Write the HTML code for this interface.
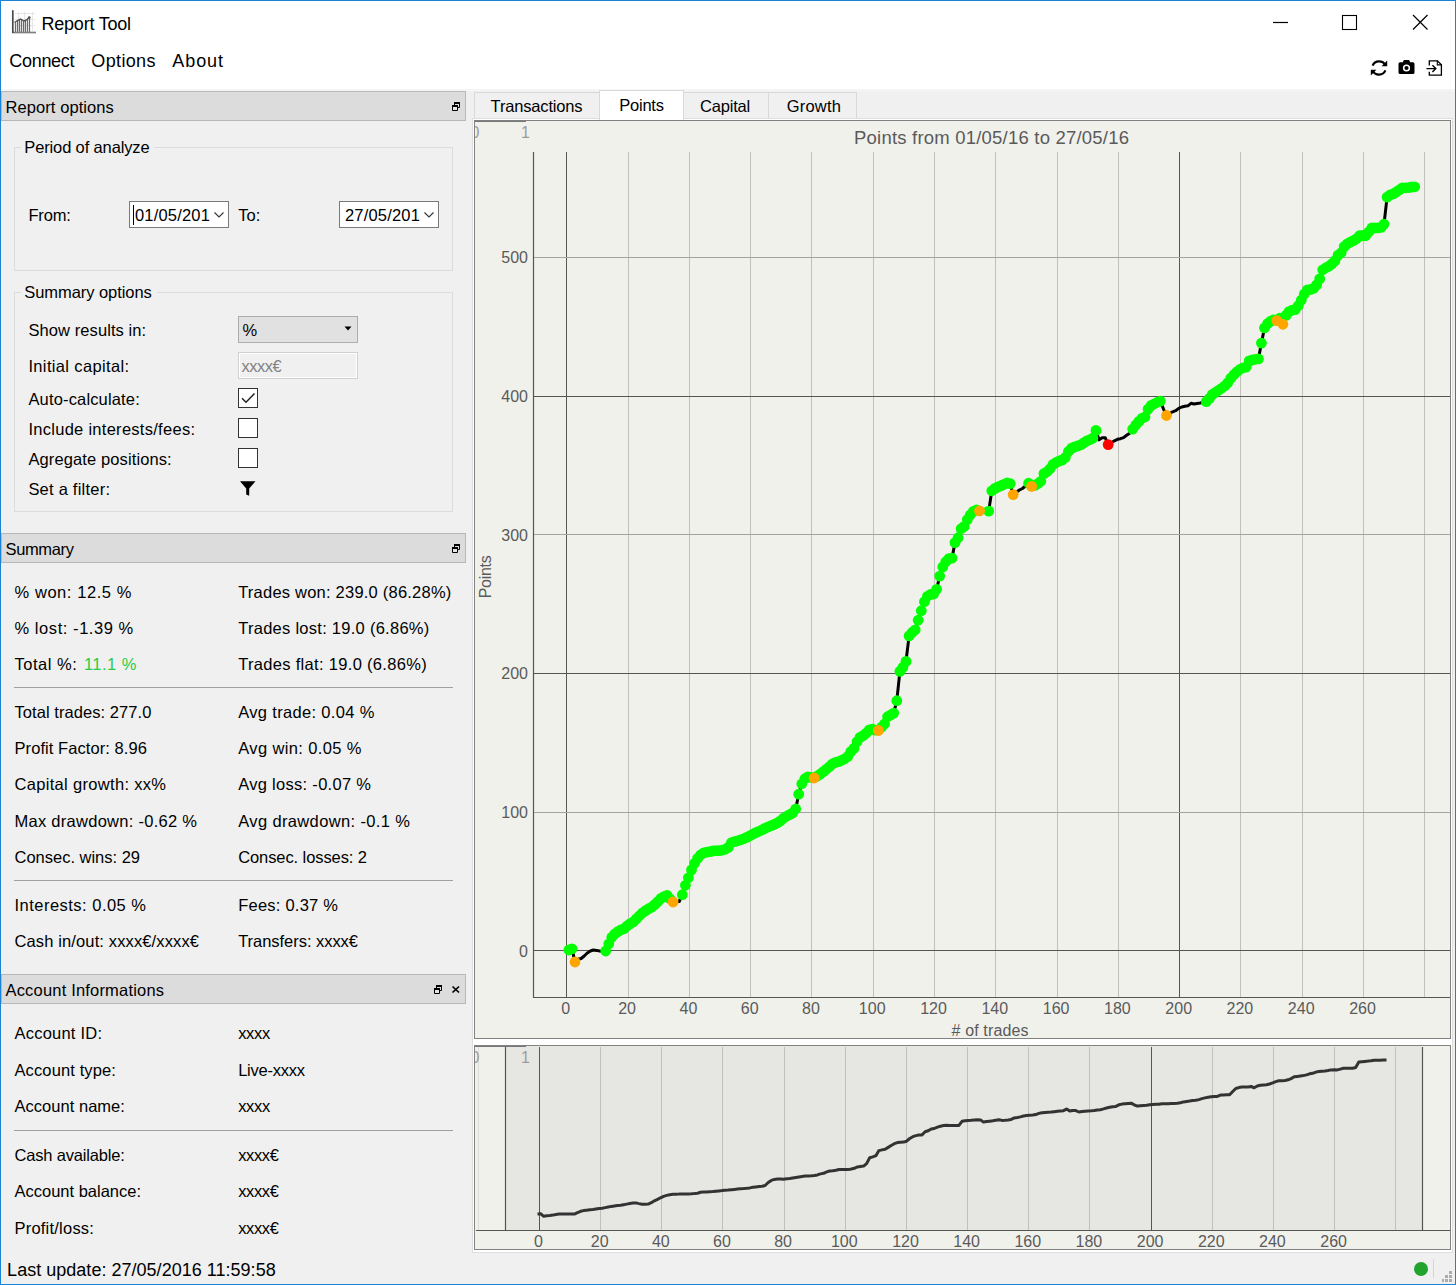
<!DOCTYPE html>
<html lang="en"><head><meta charset="utf-8"><title>Report Tool</title>
<style>
html,body{margin:0;padding:0}
body{width:1456px;height:1285px;position:relative;overflow:hidden;background:#f0f0f0;font-family:"Liberation Sans",sans-serif}
.r{position:absolute;display:block}
.t{position:absolute;white-space:pre;line-height:20px;height:20px}
</style></head><body>
<div class="r" style="left:0px;top:0px;width:1456px;height:1285px;background:#f0f0f0;"></div>
<div class="r" style="left:1px;top:1px;width:1454px;height:88px;background:#fff;"></div>
<div class="r" style="left:1px;top:89px;width:1454px;height:2px;background:#f5f5f5;"></div>
<svg class="r" style="left:0;top:0" width="40" height="40" viewBox="0 0 40 40">
<path d="M18.500 12v19M24.500 12v19M32.500 12v19M15 13.500h20M15 19.500h20M15 25.500h20" stroke="#e6e6e6" stroke-width="1" fill="none"/>
<path d="M15.500 22.500V32M17.500 21V32M19.500 19.500V32M21.500 19.500V32M23.500 21V32M25.500 21V32M27.500 19.500V32M29.500 17.500V32" stroke="#6a6a6a" stroke-width="1.200" fill="none"/>
<path d="M14.500 22.500L17.500 20.500 20.500 19 24 21 26.500 20 29.500 17" stroke="#505050" stroke-width="1.400" fill="none"/>
<circle cx="29.300" cy="17.600" r="1.300" fill="#505050"/>
<path d="M12 32.500H36" fill="none" stroke="#808080" stroke-width="1.700"/><path d="M12.800 10.200V33" fill="none" stroke="#4a4a4a" stroke-width="1.700"/>
</svg>
<span class="t" style="left:41.5px;top:13.76px;font-size:18.00px;color:#000;letter-spacing:-0.223px;">Report Tool</span>
<svg class="r" style="left:1260px;top:6px" width="190" height="34" viewBox="0 0 190 34">
<path d="M13 16.500h15" stroke="#000" stroke-width="1.200" fill="none"/>
<rect x="82.500" y="9.500" width="14" height="14" fill="none" stroke="#000" stroke-width="1.100"/>
<path d="M153 9l14.5 14.5M167.5 9L153 23.5" stroke="#000" stroke-width="1.2" fill="none"/>
</svg>
<span class="t" style="left:9.3px;top:50.76px;font-size:18.00px;color:#000;letter-spacing:-0.308px;">Connect</span>
<span class="t" style="left:91.3px;top:50.76px;font-size:18.00px;color:#000;letter-spacing:0.361px;">Options</span>
<span class="t" style="left:172.3px;top:50.76px;font-size:18.00px;color:#000;letter-spacing:0.914px;">About</span>
<svg class="r" style="left:1367px;top:55.5px" width="82" height="24" viewBox="0 0 82 24">
<g fill="none" stroke="#000" stroke-width="2.2">
<path d="M18.3 9.2A7 7 0 0 0 5.6 9.6"/><path d="M5.7 14.8A7 7 0 0 0 18.4 14.4"/></g>
<path d="M20.2 4.6v5.6h-5.6zM3.8 19.4v-5.6h5.6z" fill="#000"/>
<path d="M31.5 7.8a1.6 1.6 0 0 1 1.6-1.6h2.6l1.2-2.1h5.2l1.2 2.1h2.6a1.6 1.6 0 0 1 1.6 1.6v8.6a1.6 1.6 0 0 1-1.6 1.6H33.1a1.6 1.6 0 0 1-1.6-1.6z" fill="#000"/>
<circle cx="39.5" cy="12" r="3.6" fill="#fff"/><circle cx="39.5" cy="12" r="2.1" fill="#000"/>
<path d="M62.3 9.5V4.8h8.2l3.9 3.9v10.5H62.3v-3.4" fill="none" stroke="#000" stroke-width="1.3"/>
<path d="M70.3 4.8v4.1h4.1" fill="none" stroke="#000" stroke-width="1.1"/>
<path d="M59.5 12.6h9M65.4 9.2l3.4 3.4-3.4 3.4" fill="none" stroke="#000" stroke-width="1.4"/>
</svg>
<div class="r" style="left:1px;top:91px;width:465px;height:30px;background:#dcdcdc;border:1px solid #b8b8b8;box-sizing:border-box;"></div>
<span class="t" style="left:5.5px;top:97.28px;font-size:16.50px;color:#000;letter-spacing:0.076px;">Report options</span>
<svg class="r" style="left:452px;top:102px" width="9" height="10" viewBox="0 0 9 10">
<path d="M2.500 0.500h5v5h-5z" fill="none" stroke="#000" stroke-width="1"/><path d="M2 1h6" stroke="#000" stroke-width="2"/>
<path d="M0.500 3.500h5v5h-5z" fill="#e4e4e4" stroke="#000" stroke-width="1"/><path d="M0 4h6" stroke="#000" stroke-width="2"/></svg>
<div class="r" style="left:1px;top:533px;width:465px;height:30px;background:#dcdcdc;border:1px solid #b8b8b8;box-sizing:border-box;"></div>
<span class="t" style="left:5.5px;top:539.28px;font-size:16.50px;color:#000;letter-spacing:-0.366px;">Summary</span>
<svg class="r" style="left:452px;top:544px" width="9" height="10" viewBox="0 0 9 10">
<path d="M2.500 0.500h5v5h-5z" fill="none" stroke="#000" stroke-width="1"/><path d="M2 1h6" stroke="#000" stroke-width="2"/>
<path d="M0.500 3.500h5v5h-5z" fill="#e4e4e4" stroke="#000" stroke-width="1"/><path d="M0 4h6" stroke="#000" stroke-width="2"/></svg>
<div class="r" style="left:1px;top:974px;width:465px;height:30px;background:#dcdcdc;border:1px solid #b8b8b8;box-sizing:border-box;"></div>
<span class="t" style="left:5.5px;top:980.28px;font-size:16.50px;color:#000;letter-spacing:0.184px;">Account Informations</span>
<svg class="r" style="left:434px;top:985px" width="9" height="10" viewBox="0 0 9 10">
<path d="M2.500 0.500h5v5h-5z" fill="none" stroke="#000" stroke-width="1"/><path d="M2 1h6" stroke="#000" stroke-width="2"/>
<path d="M0.500 3.500h5v5h-5z" fill="#e4e4e4" stroke="#000" stroke-width="1"/><path d="M0 4h6" stroke="#000" stroke-width="2"/></svg>
<svg class="r" style="left:451px;top:985px" width="10" height="9" viewBox="0 0 10 9">
<path d="M1.500 1.500l6.500 6M8 1.500l-6.500 6" stroke="#000" stroke-width="1.700" fill="none"/></svg>
<div class="r" style="left:14px;top:147px;width:439px;height:124px;border:1px solid #dcdcdc;box-sizing:border-box;"></div>
<div class="r" style="left:21px;top:145px;width:133.3px;height:5px;background:#f0f0f0;"></div>
<span class="t" style="left:24.3px;top:137.08px;font-size:16.50px;color:#000;letter-spacing:-0.137px;">Period of analyze</span>
<div class="r" style="left:14px;top:292px;width:439px;height:220px;border:1px solid #dcdcdc;box-sizing:border-box;"></div>
<div class="r" style="left:21px;top:290px;width:135.5px;height:5px;background:#f0f0f0;"></div>
<span class="t" style="left:24.3px;top:282.08px;font-size:16.50px;color:#000;letter-spacing:-0.063px;">Summary options</span>
<span class="t" style="left:28.4px;top:205.28px;font-size:16.50px;color:#000;letter-spacing:-0.146px;">From:</span>
<span class="t" style="left:238.3px;top:205.28px;font-size:16.50px;color:#000;letter-spacing:-0.006px;">To:</span>
<div class="r" style="left:129px;top:201px;width:100px;height:27px;background:#fff;border:1px solid #7a7a7a;box-sizing:border-box;"></div>
<span class="t" style="left:134.9px;top:205.28px;font-size:16.50px;color:#000;letter-spacing:0.200px;">01/05/201</span>
<svg class="r" style="left:212px;top:210px" width="14" height="10" viewBox="0 0 14 10"><path d="M2.500 2.500l4.500 4.500 4.500-4.500" fill="none" stroke="#333" stroke-width="1.100"/></svg>
<div class="r" style="left:133px;top:205px;width:1px;height:20px;background:#000;"></div>
<div class="r" style="left:339px;top:201px;width:100px;height:27px;background:#fff;border:1px solid #7a7a7a;box-sizing:border-box;"></div>
<span class="t" style="left:344.9px;top:205.28px;font-size:16.50px;color:#000;letter-spacing:0.200px;">27/05/201</span>
<svg class="r" style="left:422px;top:210px" width="14" height="10" viewBox="0 0 14 10"><path d="M2.500 2.500l4.500 4.500 4.500-4.500" fill="none" stroke="#333" stroke-width="1.100"/></svg>
<span class="t" style="left:28.4px;top:320.28px;font-size:16.50px;color:#000;letter-spacing:0.089px;">Show results in:</span>
<span class="t" style="left:28.4px;top:356.28px;font-size:16.50px;color:#000;letter-spacing:0.355px;">Initial capital:</span>
<span class="t" style="left:28.4px;top:389.28px;font-size:16.50px;color:#000;letter-spacing:0.161px;">Auto-calculate:</span>
<span class="t" style="left:28.4px;top:419.28px;font-size:16.50px;color:#000;letter-spacing:0.277px;">Include interests/fees:</span>
<span class="t" style="left:28.4px;top:449.28px;font-size:16.50px;color:#000;letter-spacing:0.114px;">Agregate positions:</span>
<span class="t" style="left:28.4px;top:479.28px;font-size:16.50px;color:#000;letter-spacing:0.227px;">Set a filter:</span>
<div class="r" style="left:238px;top:316px;width:120px;height:27px;background:#e1e1e1;border:1px solid #adadad;box-sizing:border-box;"></div>
<span class="t" style="left:242.5px;top:320.28px;font-size:16.50px;color:#000;">%</span>
<svg class="r" style="left:343px;top:325px" width="10" height="8" viewBox="0 0 10 8"><path d="M1.500 1.500h7L5 5.500z" fill="#000"/></svg>
<div class="r" style="left:238px;top:352px;width:120px;height:27px;background:#f0f0f0;border:1px solid #d0d0d0;box-sizing:border-box;box-shadow:0 0 0 1px #fff inset;"></div>
<span class="t" style="left:241.4px;top:356.28px;font-size:16.50px;color:#838383;letter-spacing:-0.444px;">xxxx€</span>
<div class="r" style="left:238px;top:388px;width:20px;height:20px;background:#fff;border:1px solid #333;box-sizing:border-box;"></div>
<svg class="r" style="left:238px;top:388px" width="20" height="20" viewBox="0 0 20 20"><path d="M4 10.300l4 4 8.500-8.800" fill="none" stroke="#222" stroke-width="1.500"/></svg>
<div class="r" style="left:238px;top:418px;width:20px;height:20px;background:#fff;border:1px solid #333;box-sizing:border-box;"></div>
<div class="r" style="left:238px;top:448px;width:20px;height:20px;background:#fff;border:1px solid #333;box-sizing:border-box;"></div>
<svg class="r" style="left:238px;top:479px" width="20" height="20" viewBox="0 0 20 20"><path d="M2 2.200h15.500L11.200 9.400v7.400l-3.000-1.400V9.400z" fill="#000"/></svg>
<span class="t" style="left:14.5px;top:582.28px;font-size:16.50px;color:#000;letter-spacing:0.569px;">% won: 12.5 %</span>
<span class="t" style="left:238.2px;top:582.28px;font-size:16.50px;color:#000;letter-spacing:0.220px;">Trades won: 239.0 (86.28%)</span>
<span class="t" style="left:14.5px;top:618.28px;font-size:16.50px;color:#000;letter-spacing:0.559px;">% lost: -1.39 %</span>
<span class="t" style="left:238.2px;top:618.28px;font-size:16.50px;color:#000;letter-spacing:0.269px;">Trades lost: 19.0 (6.86%)</span>
<span class="t" style="left:14.5px;top:654.28px;font-size:16.50px;color:#000;letter-spacing:0.515px;">Total %:</span>
<span class="t" style="left:83.9px;top:654.28px;font-size:16.50px;color:#2ecc40;letter-spacing:0.490px;">11.1 %</span>
<span class="t" style="left:238.2px;top:654.28px;font-size:16.50px;color:#000;letter-spacing:0.313px;">Trades flat: 19.0 (6.86%)</span>
<div class="r" style="left:14px;top:687px;width:439px;height:1px;background:#a0a0a0;"></div>
<span class="t" style="left:14.5px;top:702.28px;font-size:16.50px;color:#000;letter-spacing:0.063px;">Total trades: 277.0</span>
<span class="t" style="left:238.2px;top:702.28px;font-size:16.50px;color:#000;letter-spacing:0.333px;">Avg trade: 0.04 %</span>
<span class="t" style="left:14.5px;top:738.28px;font-size:16.50px;color:#000;letter-spacing:0.070px;">Profit Factor: 8.96</span>
<span class="t" style="left:238.2px;top:738.28px;font-size:16.50px;color:#000;letter-spacing:0.377px;">Avg win: 0.05 %</span>
<span class="t" style="left:14.5px;top:774.28px;font-size:16.50px;color:#000;letter-spacing:0.316px;">Capital growth: xx%</span>
<span class="t" style="left:238.2px;top:774.28px;font-size:16.50px;color:#000;letter-spacing:0.294px;">Avg loss: -0.07 %</span>
<span class="t" style="left:14.5px;top:811.28px;font-size:16.50px;color:#000;letter-spacing:0.275px;">Max drawdown: -0.62 %</span>
<span class="t" style="left:238.2px;top:811.28px;font-size:16.50px;color:#000;letter-spacing:0.369px;">Avg drawdown: -0.1 %</span>
<span class="t" style="left:14.5px;top:847.28px;font-size:16.50px;color:#000;letter-spacing:-0.009px;">Consec. wins: 29</span>
<span class="t" style="left:238.2px;top:847.28px;font-size:16.50px;color:#000;letter-spacing:-0.089px;">Consec. losses: 2</span>
<div class="r" style="left:14px;top:880px;width:439px;height:1px;background:#a0a0a0;"></div>
<span class="t" style="left:14.5px;top:895.28px;font-size:16.50px;color:#000;letter-spacing:0.480px;">Interests: 0.05 %</span>
<span class="t" style="left:238.2px;top:895.28px;font-size:16.50px;color:#000;letter-spacing:0.234px;">Fees: 0.37 %</span>
<span class="t" style="left:14.5px;top:931.28px;font-size:16.50px;color:#000;letter-spacing:0.127px;">Cash in/out: xxxx€/xxxx€</span>
<span class="t" style="left:238.2px;top:931.28px;font-size:16.50px;color:#000;letter-spacing:-0.041px;">Transfers: xxxx€</span>
<span class="t" style="left:14.5px;top:1023.28px;font-size:16.50px;color:#000;letter-spacing:0.221px;">Account ID:</span>
<span class="t" style="left:238.2px;top:1023.28px;font-size:16.50px;color:#000;letter-spacing:-0.333px;">xxxx</span>
<span class="t" style="left:14.5px;top:1060.28px;font-size:16.50px;color:#000;letter-spacing:0.119px;">Account type:</span>
<span class="t" style="left:238.2px;top:1060.28px;font-size:16.50px;color:#000;letter-spacing:-0.245px;">Live-xxxx</span>
<span class="t" style="left:14.5px;top:1096.28px;font-size:16.50px;color:#000;letter-spacing:0.028px;">Account name:</span>
<span class="t" style="left:238.2px;top:1096.28px;font-size:16.50px;color:#000;letter-spacing:-0.333px;">xxxx</span>
<div class="r" style="left:14px;top:1130px;width:439px;height:1px;background:#a0a0a0;"></div>
<span class="t" style="left:14.5px;top:1145.28px;font-size:16.50px;color:#000;letter-spacing:-0.172px;">Cash available:</span>
<span class="t" style="left:238.2px;top:1145.28px;font-size:16.50px;color:#000;letter-spacing:-0.369px;">xxxx€</span>
<span class="t" style="left:14.5px;top:1181.28px;font-size:16.50px;color:#000;letter-spacing:-0.005px;">Account balance:</span>
<span class="t" style="left:238.2px;top:1181.28px;font-size:16.50px;color:#000;letter-spacing:-0.369px;">xxxx€</span>
<span class="t" style="left:14.5px;top:1218.28px;font-size:16.50px;color:#000;letter-spacing:0.216px;">Profit/loss:</span>
<span class="t" style="left:238.2px;top:1218.28px;font-size:16.50px;color:#000;letter-spacing:-0.369px;">xxxx€</span>
<span class="t" style="left:7.1px;top:1259.76px;font-size:18.00px;color:#000;letter-spacing:0.022px;">Last update: 27/05/2016 11:59:58</span>
<div class="r" style="left:1414px;top:1262px;width:14px;height:14px;border-radius:50%;background:#22a32e"></div>
<div class="r" style="left:1433px;top:1259px;width:1px;height:19px;background:#d6d6d6;"></div>
<svg class="r" style="left:1440px;top:1269px" width="14" height="14" viewBox="0 0 14 14"><g fill="#adadad"><rect x="9" y="2" width="3" height="3"/><rect x="5" y="6" width="3" height="3"/><rect x="9" y="6" width="3" height="3"/><rect x="2" y="10" width="2" height="3"/><rect x="5" y="10" width="3" height="3"/><rect x="9" y="10" width="3" height="3"/></g></svg>
<div class="r" style="left:472px;top:118px;width:981px;height:1135px;background:#fff;border:1px solid #dedede;box-sizing:border-box;"></div>
<div class="r" style="left:474px;top:92px;width:126px;height:26px;background:#f0f0f0;border:1px solid #d9d9d9;box-sizing:border-box;border-bottom:none;"></div>
<span class="t" style="left:490.6px;top:95.78px;font-size:16.50px;color:#000;letter-spacing:-0.167px;">Transactions</span>
<div class="r" style="left:683px;top:92px;width:86px;height:26px;background:#f0f0f0;border:1px solid #d9d9d9;box-sizing:border-box;border-bottom:none;"></div>
<span class="t" style="left:700.0px;top:95.78px;font-size:16.50px;color:#000;letter-spacing:-0.193px;">Capital</span>
<div class="r" style="left:768px;top:92px;width:89px;height:26px;background:#f0f0f0;border:1px solid #d9d9d9;box-sizing:border-box;border-bottom:none;"></div>
<span class="t" style="left:786.8px;top:95.78px;font-size:16.50px;color:#000;letter-spacing:0.183px;">Growth</span>
<div class="r" style="left:599px;top:90px;width:85px;height:30px;background:#fff;border:1px solid #d9d9d9;box-sizing:border-box;border-bottom:none;"></div>
<span class="t" style="left:619.2px;top:95.08px;font-size:16.50px;color:#000;letter-spacing:-0.211px;">Points</span>
<svg class="r" style="left:474px;top:120px" width="977" height="919" viewBox="474 120 977 919" font-family="Liberation Sans, sans-serif">
<rect x="474" y="120" width="977" height="919" fill="#f1f1ec"/>
<path d="M566.5 152 V997" stroke="#555" stroke-width="1"/>
<path d="M628.5 152 V997" stroke="#c0c0bc" stroke-width="1"/>
<path d="M689.5 152 V997" stroke="#c0c0bc" stroke-width="1"/>
<path d="M750.5 152 V997" stroke="#c0c0bc" stroke-width="1"/>
<path d="M811.5 152 V997" stroke="#c0c0bc" stroke-width="1"/>
<path d="M873.5 152 V997" stroke="#c0c0bc" stroke-width="1"/>
<path d="M934.5 152 V997" stroke="#c0c0bc" stroke-width="1"/>
<path d="M995.5 152 V997" stroke="#c0c0bc" stroke-width="1"/>
<path d="M1057.5 152 V997" stroke="#c0c0bc" stroke-width="1"/>
<path d="M1118.5 152 V997" stroke="#c0c0bc" stroke-width="1"/>
<path d="M1179.5 152 V997" stroke="#555" stroke-width="1"/>
<path d="M1240.5 152 V997" stroke="#c0c0bc" stroke-width="1"/>
<path d="M1302.5 152 V997" stroke="#c0c0bc" stroke-width="1"/>
<path d="M1363.5 152 V997" stroke="#c0c0bc" stroke-width="1"/>
<path d="M1424.5 152 V997" stroke="#c0c0bc" stroke-width="1"/>
<path d="M533 950.5 H1450" stroke="#555" stroke-width="1"/>
<path d="M533 812.5 H1450" stroke="#a3a3a0" stroke-width="1"/>
<path d="M533 673.5 H1450" stroke="#555" stroke-width="1"/>
<path d="M533 534.5 H1450" stroke="#a3a3a0" stroke-width="1"/>
<path d="M533 396.5 H1450" stroke="#555" stroke-width="1"/>
<path d="M533 257.5 H1450" stroke="#a3a3a0" stroke-width="1"/>
<path d="M533.5 152 V997.5 H1450" fill="none" stroke="#555" stroke-width="1.2"/>
<path d="M568.9 950.0 L572.0 948.8 L575.0 962.0 L578.1 959.3 L581.2 958.5 L584.2 956.0 L587.3 953.0 L590.4 951.0 L593.4 950.0 L596.5 950.4 L599.6 951.0 L602.6 951.2 L605.7 951.0 L608.8 943.8 L611.8 937.2 L614.9 933.8 L617.9 931.6 L621.0 929.9 L624.1 928.6 L627.1 926.0 L630.2 923.6 L633.3 921.9 L636.3 918.9 L639.4 915.8 L642.5 912.8 L645.5 910.6 L648.6 908.7 L651.7 907.2 L654.7 904.6 L657.8 901.6 L660.8 898.5 L663.9 896.6 L667.0 895.4 L670.0 898.8 L673.1 902.0 L676.2 901.8 L679.2 901.6 L682.3 894.7 L685.4 885.3 L688.4 877.8 L691.5 869.9 L694.6 863.3 L697.6 858.4 L700.7 854.8 L703.7 852.8 L706.8 852.1 L709.9 851.6 L712.9 851.0 L716.0 850.7 L719.1 850.7 L722.1 850.2 L725.2 849.3 L728.3 847.4 L731.3 842.7 L734.4 841.7 L737.5 840.8 L740.5 839.9 L743.6 838.8 L746.6 837.4 L749.7 835.9 L752.8 834.2 L755.8 832.6 L758.9 831.3 L762.0 829.9 L765.0 828.4 L768.1 826.9 L771.2 825.7 L774.2 824.4 L777.3 822.9 L780.4 820.9 L783.4 818.2 L786.5 816.3 L789.5 814.6 L792.6 813.0 L795.7 809.0 L798.7 794.2 L801.8 783.8 L804.9 778.7 L807.9 776.8 L811.0 777.4 L814.1 778.0 L817.1 776.1 L820.2 774.1 L823.3 771.6 L826.3 769.2 L829.4 766.7 L832.4 764.0 L835.5 762.4 L838.6 761.6 L841.6 760.3 L844.7 758.8 L847.8 756.5 L850.8 751.6 L853.9 748.4 L857.0 741.8 L860.0 737.4 L863.1 735.6 L866.2 733.1 L869.2 730.0 L872.3 729.1 L875.3 730.1 L878.4 730.5 L881.5 727.2 L884.5 724.0 L887.6 716.7 L890.7 715.0 L893.7 713.1 L896.8 700.7 L899.9 671.4 L902.9 667.4 L906.0 661.4 L909.1 635.9 L912.1 632.5 L915.2 629.8 L918.2 620.2 L921.3 610.7 L924.4 601.7 L927.4 596.3 L930.5 594.5 L933.6 594.0 L936.6 589.3 L939.7 576.1 L942.8 566.9 L945.8 561.7 L948.9 558.6 L952.0 558.1 L955.0 542.6 L958.1 537.7 L961.1 528.7 L964.2 526.4 L967.3 519.6 L970.3 514.8 L973.4 511.3 L976.5 510.0 L979.5 510.9 L982.6 511.1 L985.7 511.1 L988.7 511.1 L991.8 490.8 L994.9 488.4 L997.9 486.9 L1001.0 485.7 L1004.0 484.3 L1007.1 483.0 L1010.2 483.6 L1013.2 494.6 L1016.3 492.2 L1019.4 490.0 L1022.4 488.5 L1025.5 486.0 L1028.6 483.2 L1031.6 486.4 L1034.7 485.4 L1037.8 483.7 L1040.8 481.3 L1043.9 473.6 L1046.9 471.8 L1050.0 468.8 L1053.1 464.4 L1056.1 462.5 L1059.2 461.0 L1062.3 460.0 L1065.3 457.5 L1068.4 451.5 L1071.5 448.2 L1074.5 447.0 L1077.6 446.0 L1080.7 444.9 L1083.7 442.9 L1086.8 440.9 L1089.8 439.7 L1092.9 438.1 L1096.0 430.4 L1099.0 439.9 L1102.1 437.7 L1105.2 437.7 L1108.2 444.6 L1111.3 442.7 L1114.4 440.8 L1117.4 439.3 L1120.5 438.7 L1123.6 437.6 L1126.6 435.3 L1129.7 433.2 L1132.7 429.1 L1135.8 425.0 L1138.9 421.4 L1141.9 418.3 L1145.0 417.0 L1148.1 409.1 L1151.1 405.5 L1154.2 403.8 L1157.3 402.3 L1160.3 401.1 L1163.4 408.8 L1166.5 415.5 L1169.5 413.6 L1172.6 411.8 L1175.6 410.7 L1178.7 408.4 L1181.8 407.0 L1184.8 406.3 L1187.9 405.8 L1191.0 403.3 L1194.0 404.0 L1197.1 403.5 L1200.2 403.0 L1203.2 402.3 L1206.3 401.6 L1209.4 398.4 L1212.4 394.4 L1215.5 392.3 L1218.5 390.3 L1221.6 388.3 L1224.7 386.0 L1227.7 382.9 L1230.8 378.1 L1233.9 374.7 L1236.9 371.8 L1240.0 369.3 L1243.1 367.8 L1246.1 367.2 L1249.2 360.9 L1252.3 360.0 L1255.3 359.3 L1258.4 358.9 L1261.4 343.1 L1264.5 327.9 L1267.6 323.6 L1270.6 321.2 L1273.7 320.0 L1276.8 320.6 L1279.8 318.1 L1282.9 324.3 L1286.0 315.4 L1289.0 311.6 L1292.1 310.1 L1295.2 309.6 L1298.2 305.7 L1301.3 300.1 L1304.3 294.0 L1307.4 289.8 L1310.5 289.5 L1313.5 288.4 L1316.6 284.9 L1319.7 278.9 L1322.7 269.8 L1325.8 267.8 L1328.9 266.2 L1331.9 263.9 L1335.0 260.6 L1338.1 255.1 L1341.1 252.8 L1344.2 246.6 L1347.2 243.9 L1350.3 242.1 L1353.4 240.6 L1356.4 238.8 L1359.5 235.7 L1362.6 235.5 L1365.6 235.8 L1368.7 232.0 L1371.8 228.0 L1374.8 228.0 L1377.9 227.9 L1381.0 227.4 L1384.0 224.1 L1387.1 197.1 L1390.1 195.0 L1393.2 193.9 L1396.3 192.0 L1399.3 190.0 L1402.4 187.8 L1405.5 187.8 L1408.5 187.6 L1411.6 187.0 L1414.7 186.8" fill="none" stroke="#000" stroke-width="3" stroke-linejoin="round" stroke-linecap="round"/>
<g fill="#00ff00">
<circle cx="568.9" cy="950.0" r="5.4"/><circle cx="572.0" cy="948.8" r="5.4"/><circle cx="605.7" cy="951.0" r="5.4"/><circle cx="608.8" cy="943.8" r="5.4"/><circle cx="611.8" cy="937.2" r="5.4"/><circle cx="614.9" cy="933.8" r="5.4"/><circle cx="617.9" cy="931.6" r="5.4"/><circle cx="621.0" cy="929.9" r="5.4"/><circle cx="624.1" cy="928.6" r="5.4"/><circle cx="627.1" cy="926.0" r="5.4"/><circle cx="630.2" cy="923.6" r="5.4"/><circle cx="633.3" cy="921.9" r="5.4"/><circle cx="636.3" cy="918.9" r="5.4"/><circle cx="639.4" cy="915.8" r="5.4"/><circle cx="642.5" cy="912.8" r="5.4"/><circle cx="645.5" cy="910.6" r="5.4"/><circle cx="648.6" cy="908.7" r="5.4"/><circle cx="651.7" cy="907.2" r="5.4"/><circle cx="654.7" cy="904.6" r="5.4"/><circle cx="657.8" cy="901.6" r="5.4"/><circle cx="660.8" cy="898.5" r="5.4"/><circle cx="663.9" cy="896.6" r="5.4"/><circle cx="667.0" cy="895.4" r="5.4"/><circle cx="670.0" cy="898.8" r="5.4"/><circle cx="682.3" cy="894.7" r="5.4"/><circle cx="685.4" cy="885.3" r="5.4"/><circle cx="688.4" cy="877.8" r="5.4"/><circle cx="691.5" cy="869.9" r="5.4"/><circle cx="694.6" cy="863.3" r="5.4"/><circle cx="697.6" cy="858.4" r="5.4"/><circle cx="700.7" cy="854.8" r="5.4"/><circle cx="703.7" cy="852.8" r="5.4"/><circle cx="706.8" cy="852.1" r="5.4"/><circle cx="709.9" cy="851.6" r="5.4"/><circle cx="712.9" cy="851.0" r="5.4"/><circle cx="716.0" cy="850.7" r="5.4"/><circle cx="719.1" cy="850.7" r="5.4"/><circle cx="722.1" cy="850.2" r="5.4"/><circle cx="725.2" cy="849.3" r="5.4"/><circle cx="728.3" cy="847.4" r="5.4"/><circle cx="731.3" cy="842.7" r="5.4"/><circle cx="734.4" cy="841.7" r="5.4"/><circle cx="737.5" cy="840.8" r="5.4"/><circle cx="740.5" cy="839.9" r="5.4"/><circle cx="743.6" cy="838.8" r="5.4"/><circle cx="746.6" cy="837.4" r="5.4"/><circle cx="749.7" cy="835.9" r="5.4"/><circle cx="752.8" cy="834.2" r="5.4"/><circle cx="755.8" cy="832.6" r="5.4"/><circle cx="758.9" cy="831.3" r="5.4"/><circle cx="762.0" cy="829.9" r="5.4"/><circle cx="765.0" cy="828.4" r="5.4"/><circle cx="768.1" cy="826.9" r="5.4"/><circle cx="771.2" cy="825.7" r="5.4"/><circle cx="774.2" cy="824.4" r="5.4"/><circle cx="777.3" cy="822.9" r="5.4"/><circle cx="780.4" cy="820.9" r="5.4"/><circle cx="783.4" cy="818.2" r="5.4"/><circle cx="786.5" cy="816.3" r="5.4"/><circle cx="789.5" cy="814.6" r="5.4"/><circle cx="792.6" cy="813.0" r="5.4"/><circle cx="795.7" cy="809.0" r="5.4"/><circle cx="798.7" cy="794.2" r="5.4"/><circle cx="801.8" cy="783.8" r="5.4"/><circle cx="804.9" cy="778.7" r="5.4"/><circle cx="807.9" cy="776.8" r="5.4"/><circle cx="811.0" cy="777.4" r="5.4"/><circle cx="817.1" cy="776.1" r="5.4"/><circle cx="820.2" cy="774.1" r="5.4"/><circle cx="823.3" cy="771.6" r="5.4"/><circle cx="826.3" cy="769.2" r="5.4"/><circle cx="829.4" cy="766.7" r="5.4"/><circle cx="832.4" cy="764.0" r="5.4"/><circle cx="835.5" cy="762.4" r="5.4"/><circle cx="838.6" cy="761.6" r="5.4"/><circle cx="841.6" cy="760.3" r="5.4"/><circle cx="844.7" cy="758.8" r="5.4"/><circle cx="847.8" cy="756.5" r="5.4"/><circle cx="850.8" cy="751.6" r="5.4"/><circle cx="853.9" cy="748.4" r="5.4"/><circle cx="857.0" cy="741.8" r="5.4"/><circle cx="860.0" cy="737.4" r="5.4"/><circle cx="863.1" cy="735.6" r="5.4"/><circle cx="866.2" cy="733.1" r="5.4"/><circle cx="869.2" cy="730.0" r="5.4"/><circle cx="872.3" cy="729.1" r="5.4"/><circle cx="875.3" cy="730.1" r="5.4"/><circle cx="881.5" cy="727.2" r="5.4"/><circle cx="884.5" cy="724.0" r="5.4"/><circle cx="887.6" cy="716.7" r="5.4"/><circle cx="890.7" cy="715.0" r="5.4"/><circle cx="893.7" cy="713.1" r="5.4"/><circle cx="896.8" cy="700.7" r="5.4"/><circle cx="899.9" cy="671.4" r="5.4"/><circle cx="902.9" cy="667.4" r="5.4"/><circle cx="906.0" cy="661.4" r="5.4"/><circle cx="909.1" cy="635.9" r="5.4"/><circle cx="912.1" cy="632.5" r="5.4"/><circle cx="915.2" cy="629.8" r="5.4"/><circle cx="918.2" cy="620.2" r="5.4"/><circle cx="921.3" cy="610.7" r="5.4"/><circle cx="924.4" cy="601.7" r="5.4"/><circle cx="927.4" cy="596.3" r="5.4"/><circle cx="930.5" cy="594.5" r="5.4"/><circle cx="933.6" cy="594.0" r="5.4"/><circle cx="936.6" cy="589.3" r="5.4"/><circle cx="939.7" cy="576.1" r="5.4"/><circle cx="942.8" cy="566.9" r="5.4"/><circle cx="945.8" cy="561.7" r="5.4"/><circle cx="948.9" cy="558.6" r="5.4"/><circle cx="952.0" cy="558.1" r="5.4"/><circle cx="955.0" cy="542.6" r="5.4"/><circle cx="958.1" cy="537.7" r="5.4"/><circle cx="961.1" cy="528.7" r="5.4"/><circle cx="964.2" cy="526.4" r="5.4"/><circle cx="967.3" cy="519.6" r="5.4"/><circle cx="970.3" cy="514.8" r="5.4"/><circle cx="973.4" cy="511.3" r="5.4"/><circle cx="976.5" cy="510.0" r="5.4"/><circle cx="988.7" cy="511.1" r="5.4"/><circle cx="991.8" cy="490.8" r="5.4"/><circle cx="994.9" cy="488.4" r="5.4"/><circle cx="997.9" cy="486.9" r="5.4"/><circle cx="1001.0" cy="485.7" r="5.4"/><circle cx="1004.0" cy="484.3" r="5.4"/><circle cx="1007.1" cy="483.0" r="5.4"/><circle cx="1010.2" cy="483.6" r="5.4"/><circle cx="1028.6" cy="483.2" r="5.4"/><circle cx="1034.7" cy="485.4" r="5.4"/><circle cx="1037.8" cy="483.7" r="5.4"/><circle cx="1040.8" cy="481.3" r="5.4"/><circle cx="1043.9" cy="473.6" r="5.4"/><circle cx="1046.9" cy="471.8" r="5.4"/><circle cx="1050.0" cy="468.8" r="5.4"/><circle cx="1053.1" cy="464.4" r="5.4"/><circle cx="1056.1" cy="462.5" r="5.4"/><circle cx="1059.2" cy="461.0" r="5.4"/><circle cx="1062.3" cy="460.0" r="5.4"/><circle cx="1065.3" cy="457.5" r="5.4"/><circle cx="1068.4" cy="451.5" r="5.4"/><circle cx="1071.5" cy="448.2" r="5.4"/><circle cx="1074.5" cy="447.0" r="5.4"/><circle cx="1077.6" cy="446.0" r="5.4"/><circle cx="1080.7" cy="444.9" r="5.4"/><circle cx="1083.7" cy="442.9" r="5.4"/><circle cx="1086.8" cy="440.9" r="5.4"/><circle cx="1089.8" cy="439.7" r="5.4"/><circle cx="1092.9" cy="438.1" r="5.4"/><circle cx="1096.0" cy="430.4" r="5.4"/><circle cx="1132.7" cy="429.1" r="5.4"/><circle cx="1135.8" cy="425.0" r="5.4"/><circle cx="1138.9" cy="421.4" r="5.4"/><circle cx="1141.9" cy="418.3" r="5.4"/><circle cx="1145.0" cy="417.0" r="5.4"/><circle cx="1148.1" cy="409.1" r="5.4"/><circle cx="1151.1" cy="405.5" r="5.4"/><circle cx="1154.2" cy="403.8" r="5.4"/><circle cx="1157.3" cy="402.3" r="5.4"/><circle cx="1160.3" cy="401.1" r="5.4"/><circle cx="1206.3" cy="401.6" r="5.4"/><circle cx="1209.4" cy="398.4" r="5.4"/><circle cx="1212.4" cy="394.4" r="5.4"/><circle cx="1215.5" cy="392.3" r="5.4"/><circle cx="1218.5" cy="390.3" r="5.4"/><circle cx="1221.6" cy="388.3" r="5.4"/><circle cx="1224.7" cy="386.0" r="5.4"/><circle cx="1227.7" cy="382.9" r="5.4"/><circle cx="1230.8" cy="378.1" r="5.4"/><circle cx="1233.9" cy="374.7" r="5.4"/><circle cx="1236.9" cy="371.8" r="5.4"/><circle cx="1240.0" cy="369.3" r="5.4"/><circle cx="1243.1" cy="367.8" r="5.4"/><circle cx="1246.1" cy="367.2" r="5.4"/><circle cx="1249.2" cy="360.9" r="5.4"/><circle cx="1252.3" cy="360.0" r="5.4"/><circle cx="1255.3" cy="359.3" r="5.4"/><circle cx="1258.4" cy="358.9" r="5.4"/><circle cx="1261.4" cy="343.1" r="5.4"/><circle cx="1264.5" cy="327.9" r="5.4"/><circle cx="1267.6" cy="323.6" r="5.4"/><circle cx="1270.6" cy="321.2" r="5.4"/><circle cx="1273.7" cy="320.0" r="5.4"/><circle cx="1279.8" cy="318.1" r="5.4"/><circle cx="1286.0" cy="315.4" r="5.4"/><circle cx="1289.0" cy="311.6" r="5.4"/><circle cx="1292.1" cy="310.1" r="5.4"/><circle cx="1295.2" cy="309.6" r="5.4"/><circle cx="1298.2" cy="305.7" r="5.4"/><circle cx="1301.3" cy="300.1" r="5.4"/><circle cx="1304.3" cy="294.0" r="5.4"/><circle cx="1307.4" cy="289.8" r="5.4"/><circle cx="1310.5" cy="289.5" r="5.4"/><circle cx="1313.5" cy="288.4" r="5.4"/><circle cx="1316.6" cy="284.9" r="5.4"/><circle cx="1319.7" cy="278.9" r="5.4"/><circle cx="1322.7" cy="269.8" r="5.4"/><circle cx="1325.8" cy="267.8" r="5.4"/><circle cx="1328.9" cy="266.2" r="5.4"/><circle cx="1331.9" cy="263.9" r="5.4"/><circle cx="1335.0" cy="260.6" r="5.4"/><circle cx="1338.1" cy="255.1" r="5.4"/><circle cx="1341.1" cy="252.8" r="5.4"/><circle cx="1344.2" cy="246.6" r="5.4"/><circle cx="1347.2" cy="243.9" r="5.4"/><circle cx="1350.3" cy="242.1" r="5.4"/><circle cx="1353.4" cy="240.6" r="5.4"/><circle cx="1356.4" cy="238.8" r="5.4"/><circle cx="1359.5" cy="235.7" r="5.4"/><circle cx="1362.6" cy="235.5" r="5.4"/><circle cx="1365.6" cy="235.8" r="5.4"/><circle cx="1368.7" cy="232.0" r="5.4"/><circle cx="1371.8" cy="228.0" r="5.4"/><circle cx="1374.8" cy="228.0" r="5.4"/><circle cx="1377.9" cy="227.9" r="5.4"/><circle cx="1381.0" cy="227.4" r="5.4"/><circle cx="1384.0" cy="224.1" r="5.4"/><circle cx="1387.1" cy="197.1" r="5.4"/><circle cx="1390.1" cy="195.0" r="5.4"/><circle cx="1393.2" cy="193.9" r="5.4"/><circle cx="1396.3" cy="192.0" r="5.4"/><circle cx="1399.3" cy="190.0" r="5.4"/><circle cx="1402.4" cy="187.8" r="5.4"/><circle cx="1405.5" cy="187.8" r="5.4"/><circle cx="1408.5" cy="187.6" r="5.4"/><circle cx="1411.6" cy="187.0" r="5.4"/><circle cx="1414.7" cy="186.8" r="5.4"/>
</g>
<g fill="#ffa500">
<circle cx="575.0" cy="962.0" r="5.4"/><circle cx="673.1" cy="902.0" r="5.4"/><circle cx="814.1" cy="778.0" r="5.4"/><circle cx="878.4" cy="730.5" r="5.4"/><circle cx="979.5" cy="510.9" r="5.4"/><circle cx="1013.2" cy="494.6" r="5.4"/><circle cx="1031.6" cy="486.4" r="5.4"/><circle cx="1166.5" cy="415.5" r="5.4"/><circle cx="1276.8" cy="320.6" r="5.4"/><circle cx="1282.9" cy="324.3" r="5.4"/>
</g>
<g fill="#ff0000">
<circle cx="1108.2" cy="444.6" r="5.4"/>
</g>
<g fill="#5a5a5a" font-size="16px">
<text x="528" y="956.5" text-anchor="end">0</text>
<text x="528" y="817.9" text-anchor="end">100</text>
<text x="528" y="679.2" text-anchor="end">200</text>
<text x="528" y="540.6" text-anchor="end">300</text>
<text x="528" y="402.0" text-anchor="end">400</text>
<text x="528" y="263.3" text-anchor="end">500</text>
<text x="565.8" y="1014" text-anchor="middle">0</text>
<text x="627.1" y="1014" text-anchor="middle">20</text>
<text x="688.4" y="1014" text-anchor="middle">40</text>
<text x="749.7" y="1014" text-anchor="middle">60</text>
<text x="810.9" y="1014" text-anchor="middle">80</text>
<text x="872.2" y="1014" text-anchor="middle">100</text>
<text x="933.5" y="1014" text-anchor="middle">120</text>
<text x="994.8" y="1014" text-anchor="middle">140</text>
<text x="1056.1" y="1014" text-anchor="middle">160</text>
<text x="1117.4" y="1014" text-anchor="middle">180</text>
<text x="1178.7" y="1014" text-anchor="middle">200</text>
<text x="1239.9" y="1014" text-anchor="middle">220</text>
<text x="1301.2" y="1014" text-anchor="middle">240</text>
<text x="1362.5" y="1014" text-anchor="middle">260</text>
<text x="990" y="1035.5" text-anchor="middle" textLength="77" lengthAdjust="spacing"># of trades</text>
<text transform="translate(491,576.800) rotate(-90)" text-anchor="middle" textLength="43" lengthAdjust="spacing">Points</text>
</g>
<text x="991.5" y="143.500" text-anchor="middle" font-size="18.5px" fill="#5a5a5a" textLength="275" lengthAdjust="spacing">Points from 01/05/16 to 27/05/16</text>
<g fill="#9c9c9c" font-size="16px"><text x="470.5" y="137.700">0</text><text x="521" y="137.700">1</text></g>
<path d="M474 121 H526" stroke="#777" stroke-width="2"/>
<rect x="474.5" y="120.5" width="976" height="918" fill="none" stroke="#828282" stroke-width="1"/>
</svg>
<svg class="r" style="left:474px;top:1045px" width="977" height="205" viewBox="474 1045 977 205" font-family="Liberation Sans, sans-serif">
<rect x="474" y="1045" width="977" height="205" fill="#f1f1ec"/>
<rect x="505" y="1046" width="917" height="184" fill="#e6e6e2"/>
<path d="M478.500 1046 V1230" stroke="#dcdcd8" stroke-width="1"/>
<path d="M539.5 1047 V1230" stroke="#555" stroke-width="1"/>
<path d="M600.5 1047 V1230" stroke="#c0c0bc" stroke-width="1"/>
<path d="M661.5 1047 V1230" stroke="#c0c0bc" stroke-width="1"/>
<path d="M722.5 1047 V1230" stroke="#c0c0bc" stroke-width="1"/>
<path d="M784.5 1047 V1230" stroke="#c0c0bc" stroke-width="1"/>
<path d="M845.5 1047 V1230" stroke="#c0c0bc" stroke-width="1"/>
<path d="M906.5 1047 V1230" stroke="#c0c0bc" stroke-width="1"/>
<path d="M967.5 1047 V1230" stroke="#c0c0bc" stroke-width="1"/>
<path d="M1028.5 1047 V1230" stroke="#c0c0bc" stroke-width="1"/>
<path d="M1089.5 1047 V1230" stroke="#c0c0bc" stroke-width="1"/>
<path d="M1151.5 1047 V1230" stroke="#555" stroke-width="1"/>
<path d="M1212.5 1047 V1230" stroke="#c0c0bc" stroke-width="1"/>
<path d="M1273.5 1047 V1230" stroke="#c0c0bc" stroke-width="1"/>
<path d="M1334.5 1047 V1230" stroke="#c0c0bc" stroke-width="1"/>
<path d="M1395.5 1047 V1230" stroke="#c0c0bc" stroke-width="1"/>
<path d="M505.500 1047 V1230 M1422.500 1047 V1230" stroke="#555" stroke-width="1.2"/>
<path d="M476 1230.500 H1450" stroke="#555" stroke-width="1.2"/>
<path d="M537.5 1213.9 L540.6 1213.7 L543.7 1216.3 L546.7 1215.8 L549.8 1215.6 L552.9 1215.1 L556.0 1214.5 L559.0 1214.1 L562.1 1213.9 L565.2 1214.0 L568.3 1214.1 L571.3 1214.1 L574.4 1214.1 L577.5 1212.6 L580.6 1211.3 L583.6 1210.6 L586.7 1210.2 L589.8 1209.8 L592.9 1209.6 L595.9 1209.1 L599.0 1208.6 L602.1 1208.2 L605.2 1207.6 L608.2 1207.0 L611.3 1206.4 L614.4 1205.9 L617.5 1205.6 L620.6 1205.3 L623.6 1204.7 L626.7 1204.1 L629.8 1203.5 L632.9 1203.1 L635.9 1202.9 L639.0 1203.6 L642.1 1204.2 L645.2 1204.2 L648.2 1204.1 L651.3 1202.7 L654.4 1200.8 L657.5 1199.4 L660.5 1197.8 L663.6 1196.4 L666.7 1195.4 L669.8 1194.7 L672.8 1194.3 L675.9 1194.2 L679.0 1194.1 L682.1 1193.9 L685.2 1193.9 L688.2 1193.9 L691.3 1193.8 L694.4 1193.6 L697.5 1193.2 L700.5 1192.3 L703.6 1192.1 L706.7 1191.9 L709.8 1191.7 L712.8 1191.5 L715.9 1191.2 L719.0 1190.9 L722.1 1190.6 L725.1 1190.2 L728.2 1190.0 L731.3 1189.7 L734.4 1189.4 L737.4 1189.1 L740.5 1188.8 L743.6 1188.6 L746.7 1188.3 L749.8 1187.9 L752.8 1187.3 L755.9 1186.9 L759.0 1186.6 L762.1 1186.3 L765.1 1185.5 L768.2 1182.5 L771.3 1180.4 L774.4 1179.4 L777.4 1179.0 L780.5 1179.1 L783.6 1179.2 L786.7 1178.8 L789.7 1178.4 L792.8 1177.9 L795.9 1177.4 L799.0 1176.9 L802.0 1176.4 L805.1 1176.1 L808.2 1175.9 L811.3 1175.7 L814.3 1175.4 L817.4 1174.9 L820.5 1173.9 L823.6 1173.3 L826.7 1171.9 L829.7 1171.0 L832.8 1170.7 L835.9 1170.2 L839.0 1169.5 L842.0 1169.4 L845.1 1169.6 L848.2 1169.6 L851.3 1169.0 L854.3 1168.3 L857.4 1166.9 L860.5 1166.5 L863.6 1166.1 L866.6 1163.6 L869.7 1157.7 L872.8 1156.9 L875.9 1155.7 L878.9 1150.6 L882.0 1149.9 L885.1 1149.3 L888.2 1147.4 L891.2 1145.5 L894.3 1143.7 L897.4 1142.6 L900.5 1142.2 L903.6 1142.1 L906.6 1141.2 L909.7 1138.5 L912.8 1136.7 L915.9 1135.6 L918.9 1135.0 L922.0 1134.9 L925.1 1131.8 L928.2 1130.8 L931.2 1129.0 L934.3 1128.5 L937.4 1127.1 L940.5 1126.2 L943.5 1125.5 L946.6 1125.2 L949.7 1125.4 L952.8 1125.4 L955.8 1125.4 L958.9 1125.4 L962.0 1121.3 L965.1 1120.8 L968.2 1120.5 L971.2 1120.3 L974.3 1120.0 L977.4 1119.8 L980.5 1119.9 L983.5 1122.1 L986.6 1121.6 L989.7 1121.2 L992.8 1120.8 L995.8 1120.3 L998.9 1119.8 L1002.0 1120.4 L1005.1 1120.2 L1008.1 1119.9 L1011.2 1119.4 L1014.3 1117.9 L1017.4 1117.5 L1020.4 1116.9 L1023.5 1116.0 L1026.6 1115.6 L1029.7 1115.3 L1032.8 1115.1 L1035.8 1114.6 L1038.9 1113.4 L1042.0 1112.7 L1045.1 1112.5 L1048.1 1112.3 L1051.2 1112.1 L1054.3 1111.7 L1057.4 1111.3 L1060.4 1111.0 L1063.5 1110.7 L1066.6 1109.1 L1069.7 1111.1 L1072.7 1110.6 L1075.8 1110.6 L1078.9 1112.0 L1082.0 1111.6 L1085.0 1111.2 L1088.1 1110.9 L1091.2 1110.8 L1094.3 1110.6 L1097.3 1110.1 L1100.4 1109.7 L1103.5 1108.9 L1106.6 1108.0 L1109.7 1107.3 L1112.7 1106.7 L1115.8 1106.4 L1118.9 1104.8 L1122.0 1104.1 L1125.0 1103.8 L1128.1 1103.5 L1131.2 1103.2 L1134.3 1104.8 L1137.3 1106.1 L1140.4 1105.7 L1143.5 1105.4 L1146.6 1105.2 L1149.6 1104.7 L1152.7 1104.4 L1155.8 1104.3 L1158.9 1104.2 L1161.9 1103.7 L1165.0 1103.8 L1168.1 1103.7 L1171.2 1103.6 L1174.2 1103.5 L1177.3 1103.3 L1180.4 1102.7 L1183.5 1101.9 L1186.6 1101.5 L1189.6 1101.1 L1192.7 1100.6 L1195.8 1100.2 L1198.9 1099.6 L1201.9 1098.6 L1205.0 1097.9 L1208.1 1097.3 L1211.2 1096.8 L1214.2 1096.5 L1217.3 1096.4 L1220.4 1095.1 L1223.5 1094.9 L1226.5 1094.8 L1229.6 1094.7 L1232.7 1091.5 L1235.8 1088.5 L1238.8 1087.6 L1241.9 1087.1 L1245.0 1086.9 L1248.1 1087.0 L1251.2 1086.5 L1254.2 1087.8 L1257.3 1086.0 L1260.4 1085.2 L1263.5 1084.9 L1266.5 1084.8 L1269.6 1084.0 L1272.7 1082.9 L1275.8 1081.6 L1278.8 1080.8 L1281.9 1080.7 L1285.0 1080.5 L1288.1 1079.8 L1291.1 1078.6 L1294.2 1076.8 L1297.3 1076.4 L1300.4 1076.0 L1303.4 1075.6 L1306.5 1074.9 L1309.6 1073.8 L1312.7 1073.3 L1315.8 1072.1 L1318.8 1071.5 L1321.9 1071.2 L1325.0 1070.9 L1328.1 1070.5 L1331.1 1069.9 L1334.2 1069.8 L1337.3 1069.9 L1340.4 1069.1 L1343.4 1068.3 L1346.5 1068.3 L1349.6 1068.3 L1352.7 1068.2 L1355.7 1067.5 L1358.8 1062.1 L1361.9 1061.7 L1365.0 1061.4 L1368.0 1061.1 L1371.1 1060.7 L1374.2 1060.2 L1377.3 1060.2 L1380.3 1060.2 L1383.4 1060.1 L1386.5 1060.0" fill="none" stroke="#333" stroke-width="3" stroke-linejoin="round"/>
<g fill="#5a5a5a" font-size="16px">
<text x="538.5" y="1247" text-anchor="middle">0</text>
<text x="599.7" y="1247" text-anchor="middle">20</text>
<text x="660.8" y="1247" text-anchor="middle">40</text>
<text x="722.0" y="1247" text-anchor="middle">60</text>
<text x="783.1" y="1247" text-anchor="middle">80</text>
<text x="844.3" y="1247" text-anchor="middle">100</text>
<text x="905.5" y="1247" text-anchor="middle">120</text>
<text x="966.6" y="1247" text-anchor="middle">140</text>
<text x="1027.8" y="1247" text-anchor="middle">160</text>
<text x="1088.9" y="1247" text-anchor="middle">180</text>
<text x="1150.1" y="1247" text-anchor="middle">200</text>
<text x="1211.3" y="1247" text-anchor="middle">220</text>
<text x="1272.4" y="1247" text-anchor="middle">240</text>
<text x="1333.6" y="1247" text-anchor="middle">260</text>
</g>
<g fill="#9c9c9c" font-size="16px"><text x="470.5" y="1063">0</text><text x="521" y="1063">1</text></g>
<path d="M474 1046 H526" stroke="#777" stroke-width="2"/>
<rect x="474.5" y="1045.5" width="976" height="204" fill="none" stroke="#828282" stroke-width="1"/>
</svg>
<div class="r" style="left:0px;top:0px;width:1456px;height:1285px;border:1px solid #1883d7;box-sizing:border-box;"></div>
</body></html>
